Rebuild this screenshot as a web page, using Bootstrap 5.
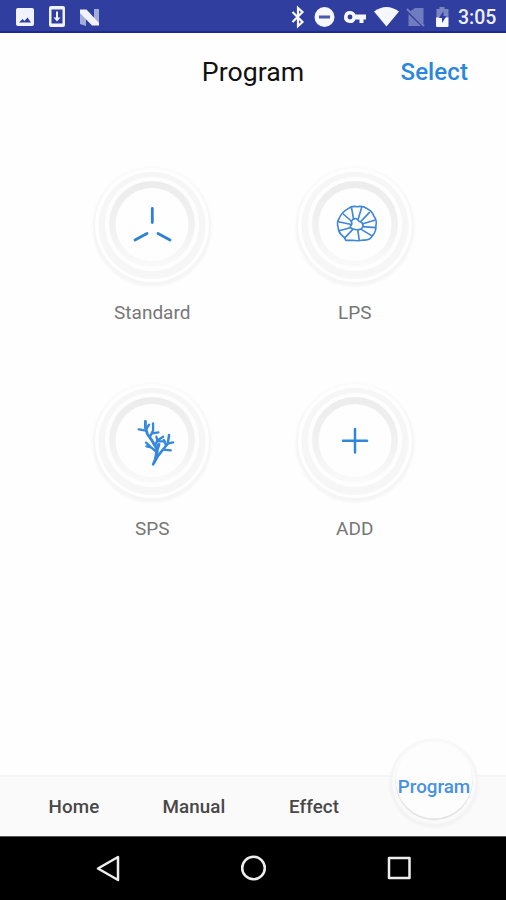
<!DOCTYPE html>
<html lang="en">
<head>
<meta charset="utf-8">
<meta name="viewport" content="width=device-width, initial-scale=1">
<title>Program</title>
<link href="https://cdn.jsdelivr.net/npm/bootstrap@5.3.0/dist/css/bootstrap.min.css" rel="stylesheet">
<style>
body { font-family: Roboto, "Liberation Sans", sans-serif; background: #fefefe; color: #111; }
.screen { width: 506px; height: 900px; }
.status-bar { height: 33px; background: #303f9f; border-bottom: 2px solid #1d2a90; color: #fff; }
.status-bar svg { display: block; }
.clock { font-size: 19.5px; font-weight: 500; line-height: 33px; width: 48px; padding-top: 1px; color: #eef; }
.title-bar { height: 78px; padding-right: 38px; }
.title-text { font-size: 26.7px; font-weight: 400; line-height: 30px; margin: 0; }
.select-link { font-size: 24px; font-weight: 500; line-height: 30px; color: #2b87dc; text-decoration: none; letter-spacing: .1px; }
.modes { padding: 49px 50px 0 51px; }
.mode { height: 216px; color: #777; text-decoration: none; }
.mode svg { display: block; }
.mode-name { font-size: 19px; line-height: 24px; margin-top: 11px; }
.tab-strip { height: 61px; background: #fafafa; border-top: 2px solid #f5f5f5; padding: 0 12px 0 14px; }
.tab-strip a { font-size: 18.8px; font-weight: 500; color: #484848; text-decoration: none; line-height: 24px; letter-spacing: .1px; }
.tab-strip .current { color: #4691e0; letter-spacing: 0; }
.bubble { position: absolute; left: 50%; top: 50%; transform: translate(-50%, -50%); margin-top: -24px; z-index: 0; }
.tab-label { position: relative; z-index: 1; display: block; }
.current .tab-label { margin-top: -40px; top: 8px; }
.android-nav { height: 64px; background: #000; border-top: 1px solid #555; }
</style>
</head>
<body>
<svg width="0" height="0" class="position-absolute" aria-hidden="true">
  <defs>
    <filter id="soft" x="-20%" y="-20%" width="140%" height="140%"><feGaussianBlur stdDeviation="1.3"/></filter>
    <filter id="edge" x="-20%" y="-20%" width="140%" height="140%"><feGaussianBlur stdDeviation=".6"/></filter>
    <linearGradient id="ringShade" x1="0" y1="0" x2="0" y2="1">
      <stop offset="0" stop-color="#ececec"/><stop offset=".6" stop-color="#f2f2f2"/><stop offset="1" stop-color="#fafafa"/>
    </linearGradient>
    <symbol id="dial" viewBox="0 0 130 130">
      <circle cx="65" cy="67" r="59.5" fill="#f5f5f5" filter="url(#soft)"/>
      <circle cx="65" cy="65" r="57" fill="#fefefe" filter="url(#edge)"/>
      <circle cx="65" cy="65.500" r="53.500" fill="#f6f6f6" filter="url(#edge)"/>
      <circle cx="65" cy="64" r="47" fill="#fefefe" filter="url(#edge)"/>
      <circle cx="65" cy="64" r="43" fill="url(#ringShade)" filter="url(#edge)"/>
      <circle cx="65" cy="64.500" r="36.500" fill="#fefefe" filter="url(#edge)"/>
    </symbol>
  </defs>
</svg>
<div class="screen d-flex flex-column overflow-hidden">
  <header class="status-bar d-flex justify-content-between flex-shrink-0">
    <svg width="110" height="31" viewBox="0 0 110 31" fill="#f1f3fc">
      <path fill-rule="evenodd" d="M18 8h14q2 0 2 2v14q0 2-2 2H18q-2 0-2-2V10q0-2 2-2zM19 22.500h12l-3.500-5-3 3.500-2-2z"/>
      <path fill-rule="evenodd" d="M51 6h12q2 0 2 2v17q0 2-2 2H51q-2 0-2-2V8q0-2 2-2zM51.500 9.500v14h11v-14z"/>
      <path d="M56 11.500h2v6h2.500l-3.500 4-3.500-4H56z"/>
      <path d="M80 10l6 1v15l-6-2zM94 9h5v15l-5-1z" opacity=".6"/>
      <path d="M80 9.500h6.500L99 23v2.500h-7L80 13z"/>
    </svg>
    <div class="d-flex">
      <svg width="174" height="32" viewBox="284 0 174 32" fill="#f6f7ff">
        <path d="M292.500 12l10 10-4.500 4V8l4.500 4-10 10" fill="none" stroke="#f6f7ff" stroke-width="2.200"/>
        <circle cx="324.500" cy="17" r="10"/><path d="M319 15.500h11v3h-11z" fill="#4a57aa"/>
        <path fill-rule="evenodd" d="M350 11a6 6 0 0 1 5.500 3.500H366v5h-2.500V23h-4v-3.500h-4A6 6 0 1 1 350 11zm0 3.600a2.400 2.400 0 1 0 0 4.800 2.400 2.400 0 0 0 0-4.800z"/>
        <path d="M374 11.500q12.500-9 25 0L386.500 26.500z"/>
        <g opacity=".33"><path d="M415 8h8.500v16L410 11.500zM408.500 14L421 26h-12.500z"/><path d="M407 9l17 17" stroke="#fff" stroke-width="2"/></g>
        <path d="M439.500 7h5v2h4v9h-12V9h3z" opacity=".38"/>
        <path d="M436 17.500h12.500V26q0 1-1 1H437q-1 0-1-1z"/>
        <path d="M443.500 11l-4.500 7h3v5l4.500-7h-3z" fill="#303f9f"/>
      </svg>
      <span class="clock">3:05</span>
    </div>
  </header>

  <div class="title-bar position-relative d-flex align-items-center justify-content-end flex-shrink-0">
    <h1 class="title-text position-absolute top-50 start-50 translate-middle">Program</h1>
    <a href="#" class="select-link">Select</a>
  </div>

  <main class="modes flex-grow-1">
    <div class="row g-0">
      <a href="#" class="mode col-6 d-flex flex-column align-items-center">
        <svg width="130" height="130"><use href="#dial"/>
          <path d="M65.300 48.500v14M60 73.500l-12 6.500M71 73.500l12 6.500" fill="none" stroke="#2e80d2" stroke-width="2.800" stroke-linecap="round"/>
        </svg>
        <span class="mode-name">Standard</span>
      </a>
      <a href="#" class="mode col-6 d-flex flex-column align-items-center">
        <svg width="130" height="130"><use href="#dial"/>
          <g transform="translate(35.250 35) scale(.3333)" fill="none" stroke="#3d86d8" stroke-width="4.800" stroke-linejoin="round" stroke-linecap="round">
            <path d="M70 40Q80 32 96 35Q112 32 126 41Q141 48 146 64Q156 76 152 92Q153 110 142 122Q134 137 114 135Q98 139 82 136H62Q58 126 49 120Q39 111 39 98Q33 82 42 70Q48 52 70 40z"/>
            <path d="M78 80Q83 69 94 71Q101 80 111 84Q117 95 108 101Q96 107 84 102Q76 101 75 94Q83 87 78 80z"/>
            <path d="M85 72L79 39M99 72L109 38M107 79L132 53M113 86L148 76M113 95L151 98M108 103L139 122M98 107L102 136M82 104L60 127M75 98L42 107M75 88L39 80M78 78L54 57"/>
          </g>
        </svg>
        <span class="mode-name">LPS</span>
      </a>
      <a href="#" class="mode col-6 d-flex flex-column align-items-center">
        <svg width="130" height="130"><use href="#dial"/>
          <g transform="translate(37.750 34) scale(.3333)" fill="none" stroke="#3688dc" stroke-linecap="round" stroke-linejoin="round">
            <path d="M85 163Q98 138 112 122L129 101L133 75" stroke-width="7.500"/>
            <path d="M88 157Q98 137 96 116L82 92L68 72L62 52V34" stroke-width="8.500"/>
            <path d="M94 143L97 118L102 104" stroke-width="10"/>
            <path d="M42 58L63 62M63 60L73 44M76 79L85 62V40M83 70L101 67M91 107L97 92L115 80M98 94L121 94M96 126L79 112L64 98M79 112L65 109M116 119L138 121M128 101L145 97M124 107L117 90M98 92L95 80" stroke-width="7"/>
          </g>
        </svg>
        <span class="mode-name">SPS</span>
      </a>
      <a href="#" class="mode col-6 d-flex flex-column align-items-center">
        <svg width="130" height="130"><use href="#dial"/>
          <path d="M65 53v23.500M53 64.800h24" fill="none" stroke="#2f87d9" stroke-width="2.500" stroke-linecap="round"/>
        </svg>
        <span class="mode-name">ADD</span>
      </a>
    </div>
  </main>

  <nav class="tab-strip row g-0 align-items-center text-center flex-shrink-0">
    <a href="#" class="col-3">Home</a>
    <a href="#" class="col-3">Manual</a>
    <a href="#" class="col-3">Effect</a>
    <a href="#" class="col-3 current position-relative">
      <svg class="bubble" width="100" height="104" viewBox="0 0 100 104">
        <circle cx="50" cy="52.500" r="44.500" fill="#f3f3f3" filter="url(#soft)"/>
        <circle cx="50" cy="51" r="42" fill="#fafafa" filter="url(#edge)"/>
        <circle cx="50" cy="50.500" r="38.700" fill="#e4e4e4" filter="url(#edge)"/>
        <circle cx="50" cy="49" r="38.300" fill="#fdfdfd" filter="url(#edge)"/>
      </svg>
      <span class="tab-label">Program</span>
    </a>
  </nav>

  <footer class="android-nav flex-shrink-0">
    <svg class="d-block" width="506" height="63" viewBox="0 837 506 63" fill="none" stroke="#eee" stroke-width="2.500" stroke-linejoin="round">
      <path d="M118 857v23l-20-11.500z"/>
      <circle cx="253.500" cy="868" r="11.300"/>
      <rect x="389" y="858" width="20.500" height="20"/>
    </svg>
  </footer>
</div>
<script src="https://cdn.jsdelivr.net/npm/bootstrap@5.3.0/dist/js/bootstrap.bundle.min.js"></script>
</body>
</html>
